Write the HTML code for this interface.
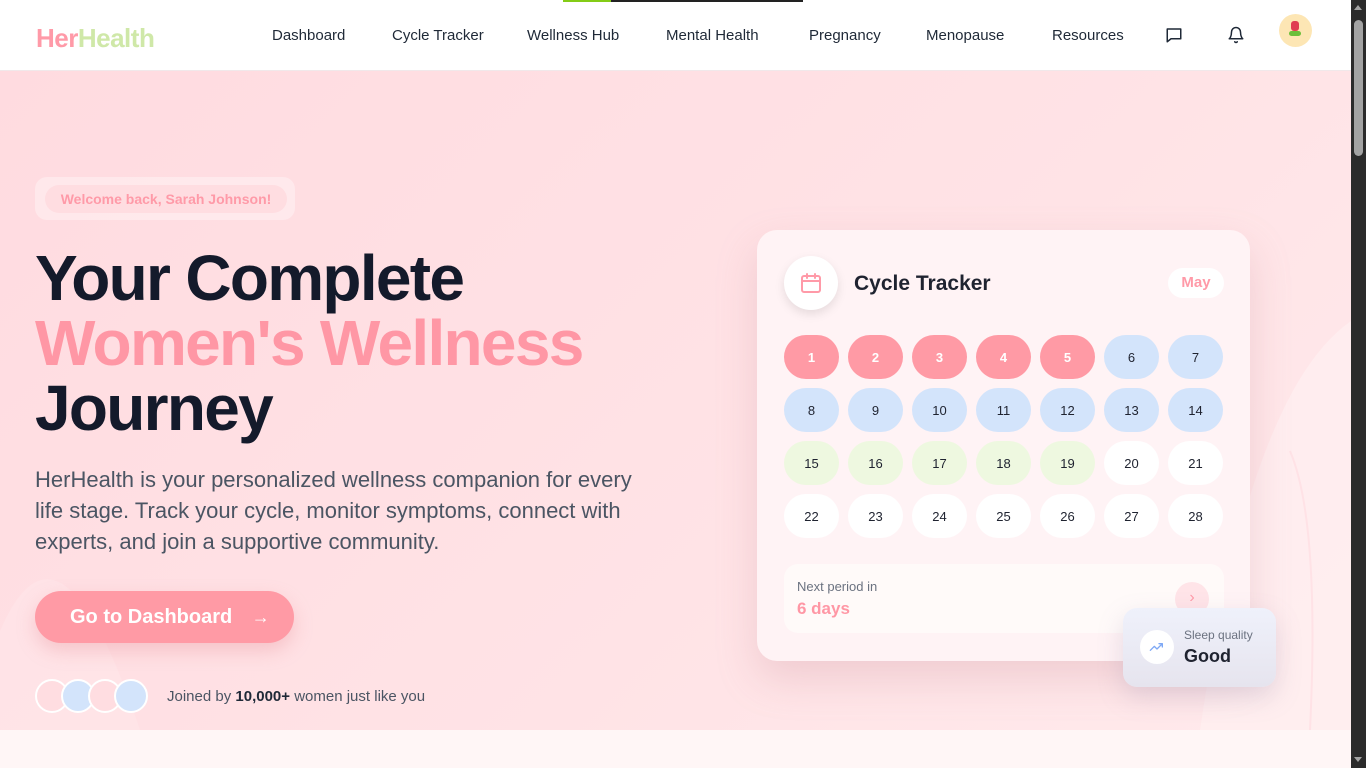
<!DOCTYPE html>
<html><head><meta charset="utf-8"><style>
*{box-sizing:border-box;margin:0;padding:0}
body{width:1366px;height:768px;overflow:hidden;font-family:"Liberation Sans",sans-serif;background:#fff6f6;position:relative}
.sb{position:absolute;left:1351px;top:0;width:15px;height:768px;background:#2b2b2b}
.sb .th{position:absolute;left:3px;top:20px;width:9px;height:136px;background:#a3a3a3;border-radius:5px}
.sb .up{position:absolute;left:3px;top:5px;border:4.5px solid transparent;border-bottom:5px solid #a3a3a3;border-top:0}
.sb .dn{position:absolute;left:3px;top:757px;border:4.5px solid transparent;border-top:5px solid #a3a3a3;border-bottom:0}
nav{position:absolute;left:0;top:0;width:1351px;height:71px;background:#fff;border-bottom:1px solid #f1e8ea}
.bar1{position:absolute;left:563px;top:0;width:48px;height:2px;background:#84cc16}
.bar2{position:absolute;left:611px;top:0;width:192px;height:2px;background:#222}
.logo{position:absolute;left:36px;top:23px;font-size:26px;font-weight:bold;letter-spacing:-0.5px}
.nl{position:absolute;top:27px;font-size:15px;color:#1f2937}
.hero{position:absolute;left:0;top:71px;width:1351px;height:659px;background:linear-gradient(135deg,#ffdbe0 0%,#ffe3e6 60%,#ffeaec 100%);overflow:hidden}
.badge{position:absolute;left:35px;top:177px;width:260px;height:43px;border-radius:12px;background:rgba(255,255,255,.35)}
.badge span{position:absolute;left:10px;top:8px;width:242px;height:28px;border-radius:14px;background:#ffdde1;color:#ff9aa8;font-size:14px;font-weight:bold;text-align:center;line-height:28px}
h1{position:absolute;left:35px;top:246px;font-size:64px;line-height:65px;font-weight:bold;color:#141a2b;letter-spacing:-1.7px}
h1 .p{color:#ff97a5}
.para{position:absolute;left:35px;top:464px;width:612px;font-size:22px;line-height:31px;color:#4b5563}
.btn{position:absolute;left:35px;top:591px;width:259px;height:52px;border-radius:26px;background:#ff9aa5;color:#fff;font-size:20px;font-weight:bold;line-height:52px;padding-left:35px;box-shadow:0 8px 18px rgba(230,140,150,.35)}
.av{position:absolute;top:679px;width:34px;height:34px;border-radius:50%;border:2.5px solid #fff}
.join{position:absolute;left:167px;top:688px;font-size:15px;color:#4b5563}
.card{position:absolute;left:757px;top:230px;width:493px;height:431px;border-radius:20px;background:#fff3f5;box-shadow:0 18px 40px rgba(200,140,150,.28)}
.ic{position:absolute;left:27px;top:26px;width:54px;height:54px;border-radius:50%;background:#fff;box-shadow:0 4px 10px rgba(0,0,0,.1)}
.ct{position:absolute;left:97px;top:42px;font-size:21px;font-weight:bold;color:#1f2330}
.may{position:absolute;left:411px;top:38px;width:56px;height:30px;border-radius:15px;background:#fff;color:#ff9aa8;font-size:15px;font-weight:bold;text-align:center;line-height:30px}
.d{position:absolute;width:55px;height:44px;border-radius:22px;font-size:13px;text-align:center;line-height:46px;color:#1f2330}
.r{background:#ff9aa5;color:#fff;font-weight:bold}.b{background:#d3e4fb}.g{background:#eef8e0}.w{background:#fff}
.np{position:absolute;left:27px;top:334px;width:440px;height:69px;border-radius:14px;background:#fffaf9}
.sleep{position:absolute;left:1123px;top:608px;width:153px;height:79px;border-radius:14px;background:linear-gradient(180deg,#eff1fb,#e6e4ee);box-shadow:0 10px 25px rgba(150,140,170,.25)}
</style></head><body>
<nav>
<div class="bar1"></div><div class="bar2"></div>
<div class="logo"><span style="color:#ff9aa8">Her</span><span style="color:#cfe8a8">Health</span></div>
<div class="nl" style="left:272px">Dashboard</div>
<div class="nl" style="left:392px">Cycle Tracker</div>
<div class="nl" style="left:527px">Wellness Hub</div>
<div class="nl" style="left:666px">Mental Health</div>
<div class="nl" style="left:809px">Pregnancy</div>
<div class="nl" style="left:926px">Menopause</div>
<div class="nl" style="left:1052px">Resources</div>
<svg style="position:absolute;left:1165px;top:26px" width="18" height="18" viewBox="0 0 24 24" fill="none" stroke="#1f2937" stroke-width="2" stroke-linejoin="round"><path d="M3 4h18v13H8l-5 4z"/></svg>
<svg style="position:absolute;left:1227px;top:26px" width="18" height="18" viewBox="0 0 24 24" fill="none" stroke="#1f2937" stroke-width="2" stroke-linecap="round" stroke-linejoin="round"><path d="M6 8a6 6 0 0 1 12 0c0 7 3 9 3 9H3s3-2 3-9"/><path d="M10.3 21a1.9 1.9 0 0 0 3.4 0"/></svg>
<div style="position:absolute;left:1279px;top:14px;width:33px;height:33px;border-radius:50%;background:#fde6b4"><div style="position:absolute;left:12px;top:7px;width:8px;height:10px;background:#e03e52;border-radius:3px"></div><div style="position:absolute;left:10px;top:17px;width:12px;height:5px;background:#6bbf3a;border-radius:3px"></div></div>
</nav>
<div class="hero">
<svg style="position:absolute;left:0;top:0" width="1351" height="659"><path d="M1351 250 Q1250 320 1200 659 L1351 659Z" fill="#fff0f1" opacity=".7"/><path d="M0 560 Q60 420 140 659 L0 659Z" fill="#ffe6e9" opacity=".6"/><path d="M1290 380 Q1320 450 1310 659" stroke="#ffe2e6" stroke-width="2" fill="none"/></svg>
</div>
<div class="badge"><span>Welcome back, Sarah Johnson!</span></div>
<h1>Your Complete<br><span class="p">Women's Wellness</span><br>Journey</h1>
<div class="para">HerHealth is your personalized wellness companion for every life stage. Track your cycle, monitor symptoms, connect with experts, and join a supportive community.</div>
<div class="btn">Go to Dashboard <span style="margin-left:14px;font-weight:normal;font-size:18px">→</span></div>
<div class="av" style="left:35px;background:#ffdde1"></div>
<div class="av" style="left:61px;background:#d3e4fb"></div>
<div class="av" style="left:88px;background:#ffdde1"></div>
<div class="av" style="left:114px;background:#d3e4fb"></div>
<div class="join">Joined by <b style="color:#1f2937">10,000+</b> women just like you</div>
<div class="card">
<div class="ic"><svg style="position:absolute;left:15px;top:15px" width="24" height="24" viewBox="0 0 24 24" fill="none" stroke="#ff9aa8" stroke-width="2" stroke-linecap="round"><rect x="3" y="5" width="18" height="16" rx="2"/><path d="M3 10h18M8 3v4M16 3v4"/></svg></div>
<div class="ct">Cycle Tracker</div>
<div class="may">May</div>
<div class="d r" style="left:27px;top:105px">1</div><div class="d r" style="left:91px;top:105px">2</div><div class="d r" style="left:155px;top:105px">3</div><div class="d r" style="left:219px;top:105px">4</div><div class="d r" style="left:283px;top:105px">5</div><div class="d b" style="left:347px;top:105px">6</div><div class="d b" style="left:411px;top:105px">7</div>
<div class="d b" style="left:27px;top:158px">8</div><div class="d b" style="left:91px;top:158px">9</div><div class="d b" style="left:155px;top:158px">10</div><div class="d b" style="left:219px;top:158px">11</div><div class="d b" style="left:283px;top:158px">12</div><div class="d b" style="left:347px;top:158px">13</div><div class="d b" style="left:411px;top:158px">14</div>
<div class="d g" style="left:27px;top:211px">15</div><div class="d g" style="left:91px;top:211px">16</div><div class="d g" style="left:155px;top:211px">17</div><div class="d g" style="left:219px;top:211px">18</div><div class="d g" style="left:283px;top:211px">19</div><div class="d w" style="left:347px;top:211px">20</div><div class="d w" style="left:411px;top:211px">21</div>
<div class="d w" style="left:27px;top:264px">22</div><div class="d w" style="left:91px;top:264px">23</div><div class="d w" style="left:155px;top:264px">24</div><div class="d w" style="left:219px;top:264px">25</div><div class="d w" style="left:283px;top:264px">26</div><div class="d w" style="left:347px;top:264px">27</div><div class="d w" style="left:411px;top:264px">28</div>
<div class="np"><div style="position:absolute;left:13px;top:15px;font-size:13px;color:#6b7280">Next period in</div><div style="position:absolute;left:13px;top:35px;font-size:17px;font-weight:bold;color:#ff97a5">6 days</div>
<div style="position:absolute;left:391px;top:18px;width:34px;height:34px;border-radius:50%;background:#ffe4e8;color:#ff9aa8;text-align:center;line-height:32px;font-size:16px">›</div></div>
</div>
<div class="sleep"><div style="position:absolute;left:17px;top:22px;width:34px;height:34px;border-radius:50%;background:#fff"><svg style="position:absolute;left:8px;top:9px" width="18" height="16" viewBox="0 0 24 24" fill="none" stroke="#7ea8f5" stroke-width="2" stroke-linecap="round" stroke-linejoin="round"><path d="M2 17l6-6 4 4 8-8M15 7h5v5"/></svg></div>
<div style="position:absolute;left:61px;top:20px;font-size:12px;color:#6b7280">Sleep quality</div><div style="position:absolute;left:61px;top:38px;font-size:18px;font-weight:bold;color:#1f2330">Good</div></div>
<div class="sb"><div class="up"></div><div class="th"></div><div class="dn"></div></div>
</body></html>
